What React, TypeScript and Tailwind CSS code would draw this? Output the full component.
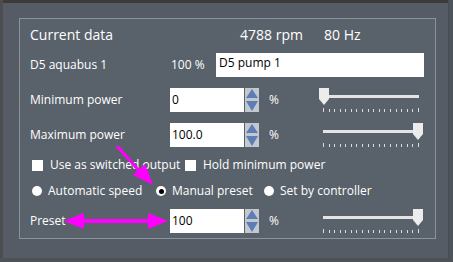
import React from 'react'

const font = { fontFamily: '"Open Sans", "Noto Sans", sans-serif' }

function Spinner() {
  return (
    <div className="flex flex-col w-[14px] h-[24px] ml-[1px] bg-[#c3c8cf]">
      <svg width="14" height="12" viewBox="0 0 14 12">
        <polygon points="7,1 13,10 1,10" fill="#5d7db5" />
      </svg>
      <svg width="14" height="12" viewBox="0 0 14 12">
        <polygon points="1,1 13,1 7,11" fill="#5d7db5" />
      </svg>
    </div>
  )
}

function Slider({ value }: { value: 'min' | 'max' }) {
  const ticks = Array.from({ length: 18 }, (_, i) => i)
  return (
    <div className="relative w-[104px] h-[24px] ml-auto mr-[12px]">
      <div className="absolute left-[4px] right-[4px] top-[7px] h-[3px] bg-[#e4e4e4]" />
      <svg
        className={value === 'min' ? 'absolute left-0 top-0' : 'absolute right-0 top-0'}
        width="10"
        height="17"
        viewBox="0 0 10 17"
      >
        <polygon points="0,0 10,0 10,11 5,17 0,11" fill="#ececec" />
      </svg>
      <div className="absolute left-[4px] right-[4px] top-[20px] flex justify-between">
        {ticks.map((i) => (
          <div
            key={i}
            className={i === 0 || i === ticks.length - 1 ? 'w-px h-[4px] bg-[#dcdcdc]' : 'w-px h-[3px] mt-[1px] bg-[#dcdcdc]'}
          />
        ))}
      </div>
    </div>
  )
}

function NumRow({ label, value, slider }: { label: string; value: string; slider: 'min' | 'max' }) {
  return (
    <div className="flex items-start h-[24px]">
      <div className="w-[140px] h-[24px] flex items-center text-[12px] text-white">{label}</div>
      <div className="w-[74px] h-[24px] bg-white flex items-center pl-[2px] text-[12px] text-black">{value}</div>
      <Spinner />
      <div className="h-[24px] flex items-center ml-[10px] text-[12px] text-white">%</div>
      <Slider value={slider} />
    </div>
  )
}

function Check({ label, className }: { label: string; className?: string }) {
  return (
    <div className={'flex items-center whitespace-nowrap ' + (className ?? '')}>
      <div className="w-[11px] h-[11px] bg-white" />
      <span className="ml-[7px] text-[12px] text-white">{label}</span>
    </div>
  )
}

function Radio({ label, checked, className }: { label: string; checked?: boolean; className?: string }) {
  return (
    <div className={'flex items-center whitespace-nowrap ' + (className ?? '')}>
      <div className="w-[10px] h-[10px] rounded-full bg-white flex items-center justify-center">
        {checked && <div className="w-[5px] h-[5px] rounded-full bg-black" />}
      </div>
      <span className="ml-[6px] text-[12px] text-white">{label}</span>
    </div>
  )
}

export default function App() {
  return (
    <div className="relative w-[453px] h-[262px] bg-[#555c65] overflow-hidden" style={font}>
      <div className="h-[3px] bg-[#3d3a38]" />
      <div className="absolute left-0 top-0 bottom-0 w-[3px] bg-[#4b4d51]" />
      <div className="absolute right-0 top-0 bottom-0 w-[5px] bg-[#4e545b] border-l border-[#474c52]" />
      <div className="absolute left-0 right-0 bottom-0 h-[4px] bg-[#4d5259]" />

      <div className="ml-[19px] mt-[15px] w-[417px] h-[221px] border border-[#8a939b] bg-[#59616a] pl-[10px]">
        <div className="flex items-center h-[30px] text-[14px] text-white whitespace-nowrap">
          <span className="w-[210px]">Current data</span>
          <span className="w-[84px]">4788 rpm</span>
          <span>80 Hz</span>
        </div>
        <div className="flex items-center h-[24px] mt-[4px] whitespace-nowrap">
          <span className="w-[141px] text-[12px] text-white">D5 aquabus 1</span>
          <span className="w-[45px] text-[12px] text-white">100 %</span>
          <div className="w-[208px] h-[24px] bg-white flex items-start pt-[1px] pl-[3px] text-[12px] text-black">D5 pump 1</div>
        </div>
        <div className="mt-[11px]">
          <NumRow label="Minimum power" value="0" slider="min" />
        </div>
        <div className="mt-[11px]">
          <NumRow label="Maximum power" value="100.0" slider="max" />
        </div>
        <div className="flex items-center h-[20px] mt-[8px] pl-[2px]">
          <Check label="Use as switched output" className="w-[153px]" />
          <Check label="Hold minimum power" />
        </div>
        <div className="flex items-center h-[20px] mt-[6px] pl-[2px]">
          <Radio label="Automatic speed" className="w-[124px]" />
          <Radio label="Manual preset" checked className="w-[108px]" />
          <Radio label="Set by controller" />
        </div>
        <div className="mt-[8px]">
          <NumRow label="Preset" value="100" slider="max" />
        </div>
      </div>

      <svg className="absolute left-0 top-0 pointer-events-none" width="453" height="262">
        <line x1="117" y1="146" x2="142" y2="174" stroke="#ff00ff" strokeWidth="3" />
        <polygon points="153,185 133,175 145,164" fill="#ff00ff" />
        <line x1="80" y1="221" x2="152" y2="221" stroke="#ff00ff" strokeWidth="4" />
        <polygon points="64,221 84,213 84,229" fill="#ff00ff" />
        <polygon points="168,221 148,213 148,229" fill="#ff00ff" />
      </svg>
    </div>
  )
}
